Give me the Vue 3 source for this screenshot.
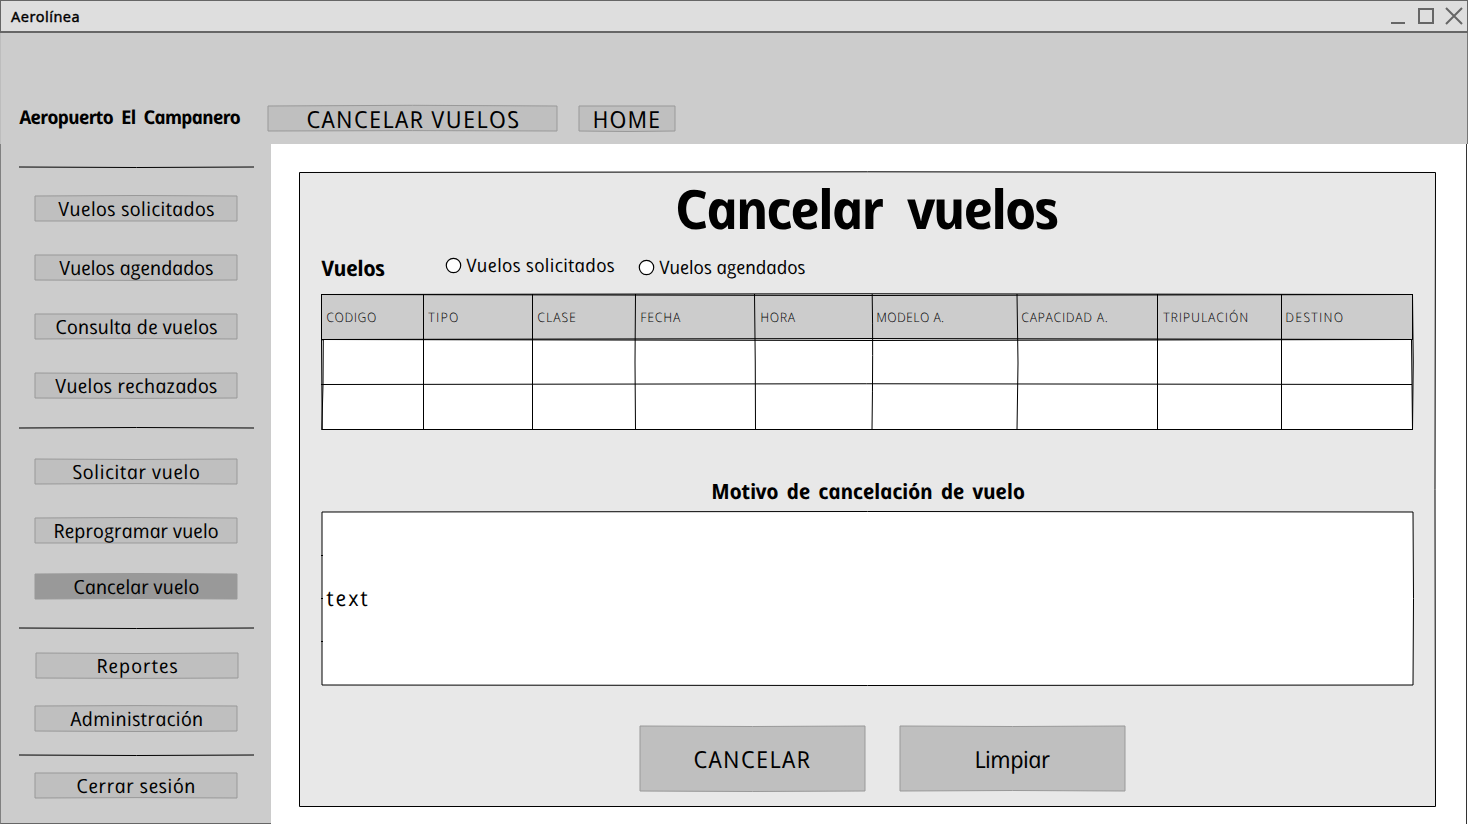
<script setup>
import { h } from 'vue'

// Hand-drawn rectangle: four edges, top and bottom slightly bowed.
const SketchBox = (props) => {
  const { w, ht, top = 0, bottom = 0, left = 0, right = 0 } = props
  const d = `M0 0Q${w / 2} ${top} ${w} 0Q${w + right} ${ht / 2} ${w} ${ht}Q${w / 2} ${ht + bottom} 0 ${ht}Q${left} ${ht / 2} 0 0Z`
  return h('svg', { width: w, height: ht, viewBox: `0 0 ${w} ${ht}`, 'aria-hidden': 'true' }, [h('path', { d })])
}
SketchBox.props = ['w', 'ht', 'top', 'bottom', 'left', 'right']

// Hand-drawn horizontal divider.
const SketchRule = (props) =>
  h('svg', { width: 235, height: 4, viewBox: '0 0 235 4', 'aria-hidden': 'true' }, [
    h('path', { d: `M0 2Q117.5 ${2 + props.bend} 235 2` }),
  ])
SketchRule.props = ['bend']

// Spreads the letters of a label over the given width.
const vFit = {
  mounted(el, { value }) {
    const gap = (value - el.offsetWidth) / (el.textContent.length - 1)
    el.style.letterSpacing = `${gap}px`
    el.style.marginRight = `${-gap}px`
  },
}

const groups = [
  {
    name: 'flights', bend: 1,
    items: [
      { label: 'Vuelos solicitados', width: 156, top: -1, bottom: 0 },
      { label: 'Vuelos agendados', width: 154, top: 0, bottom: 0.8 },
      { label: 'Consulta de vuelos', width: 162, top: 0, bottom: -1 },
      { label: 'Vuelos rechazados', width: 162, top: 1, bottom: 0.8 },
    ],
  },
  {
    name: 'requests', bend: -1,
    items: [
      { label: 'Solicitar vuelo', width: 127, top: 1, bottom: -0.8 },
      { label: 'Reprogramar vuelo', width: 165, top: -1, bottom: 0 },
      { label: 'Cancelar vuelo', width: 126, top: -1, bottom: -1, active: true },
    ],
  },
  {
    name: 'admin', bend: 1,
    items: [
      { label: 'Reportes', width: 81, top: 1, bottom: 0.8 },
      { label: 'Administración', width: 133, top: -0.8, bottom: 1 },
    ],
  },
  { name: 'session', bend: 1, items: [{ label: 'Cerrar sesión', width: 119, top: 0, bottom: -0.8 }] },
]

const columns = [
  { label: 'CODIGO', width: 50 },
  { label: 'TIPO', width: 30 },
  { label: 'CLASE', width: 39 },
  { label: 'FECHA', width: 40 },
  { label: 'HORA', width: 35 },
  { label: 'MODELO A.', width: 68 },
  { label: 'CAPACIDAD A.', width: 86 },
  { label: 'TRIPULACIÓN', width: 85 },
  { label: 'DESTINO', width: 58 },
]
</script>

<template>
  <div class="window">
    <header class="titlebar">
      <span class="app-name" v-fit="69">Aerolínea</span>
      <svg class="controls" width="76" height="30" viewBox="0 0 76 30">
        <path d="M0 22H14" />
        <path d="M28 8H42V22H28Z" />
        <path d="M55 7L71 23M71 7L55 23" />
      </svg>
    </header>

    <div class="topbar">
      <div class="brand"><strong class="hand" v-fit="222">Aeropuerto El Campanero</strong></div>
      <button class="btn nav wide">
        <SketchBox class="outline" :w="289" :ht="25" :top="-1.4" :bottom="-0.8" />
        <span class="hand" v-fit="213">CANCELAR VUELOS</span>
      </button>
      <button class="btn nav narrow">
        <SketchBox class="outline" :w="96" :ht="25" :top="0" :bottom="1" />
        <span class="hand" v-fit="68">HOME</span>
      </button>
    </div>

    <div class="body">
      <aside class="sidebar">
        <section v-for="g in groups" :key="g.name" class="group" :class="g.name">
          <SketchRule class="rule" :bend="g.bend" />
          <button v-for="i in g.items" :key="i.label" class="btn item" :class="{ active: i.active }">
            <SketchBox class="outline" :w="202" :ht="25" :top="i.top" :bottom="i.bottom" />
            <span class="hand" v-fit="i.width">{{ i.label }}</span>
          </button>
        </section>
      </aside>

      <main class="content">
        <section class="panel">
          <SketchBox class="frame" :w="1136" :ht="634" :top="-1.4" :bottom="0" :right="-1" />
          <h1><span class="hand" v-fit="384">Cancelar vuelos</span></h1>

          <div class="filters">
            <strong class="hand filter-title" v-fit="64">Vuelos</strong>
            <label class="option first">
              <svg width="17" height="17" viewBox="0 0 17 17"><circle cx="8.5" cy="8.5" r="7.2" /></svg>
              <span class="hand" v-fit="148">Vuelos solicitados</span>
            </label>
            <label class="option second">
              <svg width="17" height="17" viewBox="0 0 17 17"><circle cx="8.5" cy="8.5" r="7.2" /></svg>
              <span class="hand" v-fit="146">Vuelos agendados</span>
            </label>
          </div>

          <div class="table">
            <svg class="lines" width="1092" height="137" viewBox="0 0 1092 137" aria-hidden="true">
              <path class="white" d="M1 1H1091V136H1Z" />
              <path class="head" d="M.5 1H1091.5V45.5H.5Z" />
              <path d="M.5 .5Q546 2.5 1091.5 .5M.5 .5Q546 -1 1091.5 .5M.5 45.5Q546 47.5 1091.5 45.5M.5 45.5Q546 43.5 1091.5 45.5" />
              <path d="M0 90.5Q546 89 1091 90.5M.5 135.5H1091.5" />
              <path d="M.5 0V45.5L2.3 46Q2.5 90 .8 135.5M.5 45L1.2 136M1091.5 0V45.5M1090.5 45L1091.5 136M1091.5 0Q1093 68 1091.5 136" />
              <path d="M102.5 0V136M211.5 0V136M314.5 0Q313.5 68 314.5 136M433.5 0Q434.5 68 434.5 136M551.2 0Q552.2 55 551 136M696 0Q698 70 696 136M836.5 0V136M960.5 0V136" />
            </svg>
            <div v-for="c in columns" :key="c.label" class="th"><span class="hand" v-fit="c.width">{{ c.label }}</span></div>
          </div>

          <h2><span class="hand" v-fit="314">Motivo de cancelación de vuelo</span></h2>

          <div class="reason">
            <SketchBox class="outline" :w="1091" :ht="173" :top="-1" :bottom="1" :right="1" />
            <svg class="ticks" width="2" height="173" viewBox="0 0 2 173" aria-hidden="true">
              <path d="M0 43.5H2M0 86.5H2M0 129.5H2" />
            </svg>
            <span class="hand" v-fit="41">text</span>
          </div>

          <div class="actions">
            <button class="btn big">
              <SketchBox class="outline" :w="225" :ht="65" :top="1" :bottom="1" />
              <span class="hand" v-fit="116">CANCELAR</span>
            </button>
            <button class="btn big">
              <SketchBox class="outline" :w="225" :ht="65" :top="1" :bottom="-1" />
              <span class="hand" v-fit="76">Limpiar</span>
            </button>
          </div>
        </section>
      </main>
    </div>
  </div>
</template>

<style>
body { margin: 0; background: #fff; }
</style>

<style scoped>
.window {
  box-sizing: border-box;
  width: 1468px;
  height: 824px;
  overflow: hidden;
  display: flex;
  flex-direction: column;
  color: #000;
  background: #fff;
}
/* Upright cursive-like letterforms: the italic cut, straightened. */
.hand {
  display: inline-block;
  flex: none;
  white-space: nowrap;
  font-family: "Comic Sans MS", "Open Sans", "Noto Sans", sans-serif;
  font-style: italic;
  line-height: 1;
  transform: skewX(12deg);
}
.titlebar {
  box-sizing: border-box;
  height: 33px;
  flex: none;
  display: flex;
  align-items: center;
  justify-content: space-between;
  padding: 0 0 0 10px;
  background: #dedede;
  border: 1px solid #666;
  border-bottom-width: 2px;
}
.app-name { font: 400 14.5px/20px "Noto Sans", "Open Sans", sans-serif; -webkit-text-stroke: 0.4px #000; margin-top: -1px; }
.controls { fill: none; stroke: #666; stroke-width: 2; }
.topbar {
  box-sizing: border-box;
  height: 111px;
  flex: none;
  display: flex;
  align-items: flex-start;
  padding-top: 73px;
  background: #ccc;
  border-left: 1px solid #bdbdbd;
  border-right: 1px solid #777;
}
.brand { width: 267px; height: 23px; box-sizing: border-box; padding-left: 18px; display: flex; align-items: center; font-size: 19px; word-spacing: 4px; }
.btn {
  position: relative;
  display: flex;
  align-items: center;
  justify-content: center;
  flex: none;
  padding: 0;
  border: 0;
  background: none;
  color: #000;
}
.outline { position: absolute; left: 0; top: 0; overflow: visible; fill: #bfbfbf; stroke: #999; stroke-width: 1; }
.nav { height: 25px; font-size: 23.5px; }
.nav .hand { margin-top: 2px; }
.nav.wide { width: 289px; margin-right: 22px; }
.nav.narrow { width: 96px; }
.nav.narrow .hand { margin-left: -2px; }
.body { flex: 1; display: flex; }
.sidebar {
  box-sizing: border-box;
  width: 271px;
  flex: none;
  background: #ccc;
  border-left: 1px solid #808080;
  border-bottom: 1px solid #666;
  padding-top: 21px;
}
.group { display: flex; flex-direction: column; }
.group .rule { display: block; margin-left: 18px; flex: none; overflow: visible; fill: none; stroke: #000; stroke-width: 1; }
.item { width: 202px; height: 25px; margin-left: 34px; font-size: 19.5px; }
.active .outline { fill: #999; }
.flights { gap: 34px; height: 261px; }
.flights .rule { margin-bottom: -7px; }
.requests { height: 200px; }
.requests .item { margin-top: 34px; }
.requests .rule + .item { margin-top: 29px; }
.requests .item.active { margin-top: 31px; }
.admin { height: 127px; }
.admin .item { margin-top: 28px; }
.admin .rule + .item { margin-top: 23px; margin-left: 35px; }
.session .item { margin-top: 16px; }
.content { flex: 1; border-right: 1px solid #333; margin-right: 1px; padding: 28px 0 0 28px; }
.panel { position: relative; width: 1137px; height: 635px; display: flex; flex-direction: column; }
.frame { position: absolute; left: 0; top: 0; transform: translate(0.5px, 0.5px); overflow: visible; fill: #e8e8e8; stroke: #000; stroke-width: 1; }
h1, h2 { position: relative; margin: 0; display: flex; align-items: center; justify-content: center; font-weight: 700; }
h1 { height: 74px; font-size: 54px; word-spacing: 14px; }
h1 .hand { margin: -3px 0 0 -2px; }
.filters { position: relative; height: 48px; display: flex; align-items: flex-start; padding-left: 22px; }
.filter-title { width: auto; font-size: 21.5px; margin-top: 11px; }
.option { position: absolute; display: flex; align-items: center; gap: 4px; font-size: 18.5px; }
.option svg { fill: #fff; stroke: #000; stroke-width: 1.2; }
.option.first { left: 146px; top: 10px; }
.option.second { left: 339px; top: 12px; }
.table {
  position: relative;
  height: 136px;
  margin-left: 22px;
  display: grid;
  grid-template-columns: 102px 109px 103px 120px 116px 145px 142px 122px 131px;
  font-size: 13px;
}
.lines { position: absolute; left: 0; top: 0; overflow: visible; fill: none; stroke: #000; stroke-width: 1; }
.lines .white { fill: #fff; stroke: none; }
.lines .head { fill: #ccc; stroke: none; }
.th { position: relative; height: 46px; display: flex; align-items: center; padding-left: 5px; font-weight: 300; }
h2 { height: 82px; padding-top: 40px; box-sizing: border-box; font-size: 21px; word-spacing: 3px; }
.reason { position: relative; width: 1091px; height: 173px; margin-left: 23px; display: flex; align-items: center; font-size: 21.5px; }
.reason .outline { fill: #fff; stroke: #000; }
.reason .hand { margin: -2px 0 0 4px; }
.ticks { position: absolute; left: -1px; top: 0; fill: none; stroke: #000; stroke-width: 1; }
.actions { display: flex; gap: 35px; padding: 41px 0 0 341px; }
.big { width: 225px; height: 65px; font-size: 23.5px; }
.big .hand { margin: 2px 0 0 -2px; }
</style>
